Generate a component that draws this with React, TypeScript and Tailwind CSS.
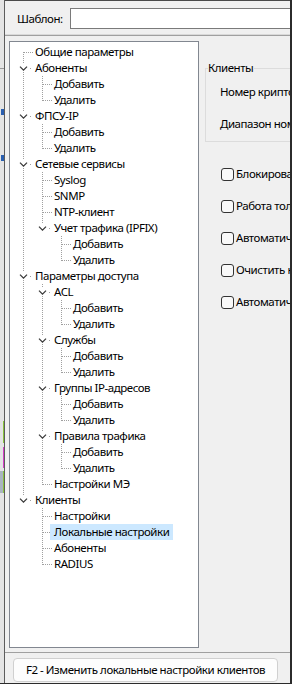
import React from "react";

type TNode = { l: string; c?: TNode[]; sel?: boolean };

const AD: TNode[] = [{ l: "Добавить" }, { l: "Удалить" }];

const tree: TNode[] = [
  { l: "Общие параметры" },
  { l: "Абоненты", c: AD },
  { l: "ФПСУ-IP", c: AD },
  {
    l: "Сетевые сервисы",
    c: [{ l: "Syslog" }, { l: "SNMP" }, { l: "NTP-клиент" }, { l: "Учет трафика (IPFIX)", c: AD }],
  },
  {
    l: "Параметры доступа",
    c: [
      { l: "ACL", c: AD },
      { l: "Службы", c: AD },
      { l: "Группы IP-адресов", c: AD },
      { l: "Правила трафика", c: AD },
      { l: "Настройки МЭ" },
    ],
  },
  {
    l: "Клиенты",
    c: [{ l: "Настройки" }, { l: "Локальные настройки", sel: true }, { l: "Абоненты" }, { l: "RADIUS" }],
  },
];

type Row = { n: TNode; guides: boolean[]; last: boolean; first: boolean };

function flatten(nodes: TNode[], depth: number, guides: boolean[], out: Row[]) {
  nodes.forEach((n, i) => {
    const last = i === nodes.length - 1;
    out.push({ n, guides, last, first: depth === 0 && i === 0 });
    if (n.c) flatten(n.c, depth + 1, [...guides, !last], out);
  });
  return out;
}

const rows = flatten(tree, 0, [], []);

const VDOT =
  "bg-[image:repeating-linear-gradient(to_bottom,#a0a0a0_0px,#a0a0a0_1px,transparent_1px,transparent_2px)]";
const HDOT =
  "bg-[image:repeating-linear-gradient(to_right,#a0a0a0_0px,#a0a0a0_1px,transparent_1px,transparent_2px)]";

function TreeRow({ r }: { r: Row }) {
  const { n, guides, last, first } = r;
  return (
    <div className="flex h-4">
      {guides.map((g, i) => (
        <div key={i} className="relative w-[19px] shrink-0">
          {g && <span className={`absolute left-[9px] top-0 h-4 w-px ${VDOT}`} />}
        </div>
      ))}
      <div className="relative w-[17px] shrink-0">
        {n.c ? (
          <>
            {!first && <span className={`absolute left-[9px] top-0 h-[3px] w-px ${VDOT}`} />}
            {!last && <span className={`absolute left-[9px] top-[12px] h-[4px] w-px ${VDOT}`} />}
            <svg className="absolute left-[5px] top-[6px]" width="9" height="5" viewBox="0 0 9 5">
              <path d="M1 0.6 L4.5 4.1 L8 0.6" fill="none" stroke="#3a3a3a" strokeWidth="1.3" />
            </svg>
            <span className="absolute left-[16px] top-[8px] h-px w-px bg-[#a0a0a0]" />
          </>
        ) : (
          <>
            <span
              className={`absolute left-[9px] w-px ${VDOT} ${
                first ? "top-[8px] h-[8px]" : last ? "top-0 h-[9px]" : "top-0 h-4"
              }`}
            />
            <span className={`absolute left-[10px] top-[8px] h-px w-[10px] ${HDOT}`} />
          </>
        )}
      </div>
      <span className={`relative whitespace-nowrap px-1 leading-4 ${n.sel ? "bg-[#cce8ff]" : ""}`}>{n.l}</span>
    </div>
  );
}

function Check({ label }: { label: string }) {
  return (
    <div className="flex h-[32px] items-center whitespace-nowrap">
      <span className="h-[13px] w-[13px] shrink-0 rounded-[3px] border border-[#333333] bg-[#f9f9f9]" />
      <span className="ml-[2px] leading-4">{label}</span>
    </div>
  );
}

export default function App() {
  return (
    <div className="flex h-[684px] w-[292px] flex-col overflow-hidden bg-[#f0f0f0] text-[11.5px] tracking-[-0.45px] text-black [font-family:'Noto_Sans',sans-serif]">
      <div className="flex min-h-0 flex-1">
        {/* background window strip */}
        <div className="flex w-[4px] shrink-0 flex-col bg-[#e4e4e4]">
          <div className="h-[68px]" />
          <div className="h-px bg-[#9a9a9a]" />
          <div className="h-[40px]" />
          <div className="ml-[1px] h-[6px] w-[3px] bg-[#2a5fb0]" />
          <div className="h-[40px]" />
          <div className="ml-[1px] h-[6px] w-[3px] bg-[#2a5fb0]" />
          <div className="h-[260px]" />
          <div className="ml-[3px] h-[22px] w-px bg-[#8ac43f]" />
          <div className="h-[4px]" />
          <div className="ml-[3px] h-[21px] w-px bg-[#d43fc8]" />
          <div className="h-[3px]" />
          <div className="h-[22px] w-[4px] bg-[#aab4c0]">
            <div className="ml-[3px] h-[22px] w-px bg-[#8ac43f]" />
          </div>
        </div>
        <div className="w-px shrink-0 bg-[#5c5c5c]" />

        {/* window */}
        <div className="flex min-w-0 flex-1 flex-col">
          <div className="h-px shrink-0 bg-[#4a4a4a]" />
          {/* header */}
          <div className="flex h-[33px] shrink-0 items-start pl-[12px] pt-[7px]">
            <div className="flex h-[21px] w-[53px] shrink-0 items-center">Шаблон:</div>
            <div className="h-[21px] min-w-0 flex-1 border border-r-0 border-[#7a7a7a] bg-white" />
          </div>
          <div className="h-px shrink-0 bg-[#d9d9d9]" />
          <div className="h-px shrink-0 bg-[#a0a0a0]" />

          {/* content */}
          <div className="flex h-[616px] shrink-0 overflow-hidden">
            <div className="ml-[4px] mt-[5px] h-[607px] w-[190px] shrink-0 overflow-hidden border border-[#828790] bg-white pl-[4px] pt-[2px]">
              {rows.map((r, i) => (
                <TreeRow key={i} r={r} />
              ))}
            </div>
            <div className="min-w-0 flex-1 overflow-hidden">
              <div className="relative ml-[6px] mt-[32px] h-[74px] w-[120px] border border-r-0 border-[#dcdcdc]">
                <span className="absolute -top-[9px] left-[2px] whitespace-nowrap bg-[#f0f0f0] pr-[1px] leading-4">
                  Клиенты
                </span>
                <div className="whitespace-nowrap pl-[14px] pt-[15px] leading-4">Номер криптографического</div>
                <div className="whitespace-nowrap pl-[14px] pt-[16px] leading-4">Диапазон номеров</div>
              </div>
              <div className="ml-[22px] mt-[16px] flex flex-col">
                <Check label="Блокировать абонентов" />
                <Check label="Работа только" />
                <Check label="Автоматическое" />
                <Check label="Очистить кэш" />
                <Check label="Автоматическая" />
              </div>
            </div>
          </div>

          <div className="h-px shrink-0 bg-[#a0a0a0]" />
          <div className="flex shrink-0 pl-[8px] pt-[5px]">
            <div className="flex h-[24px] w-[265px] items-center justify-center whitespace-nowrap rounded-[4px] border border-[#d0d0d0] bg-[#fdfdfd]">
              F2 - Изменить локальные настройки клиентов
            </div>
          </div>
          <div className="h-px shrink-0" />
        </div>
        <div className="w-[2px] shrink-0 bg-[#2b2b2b]" />
      </div>
      <div className="h-px shrink-0 bg-[#2b2b2b]" />
    </div>
  );
}
